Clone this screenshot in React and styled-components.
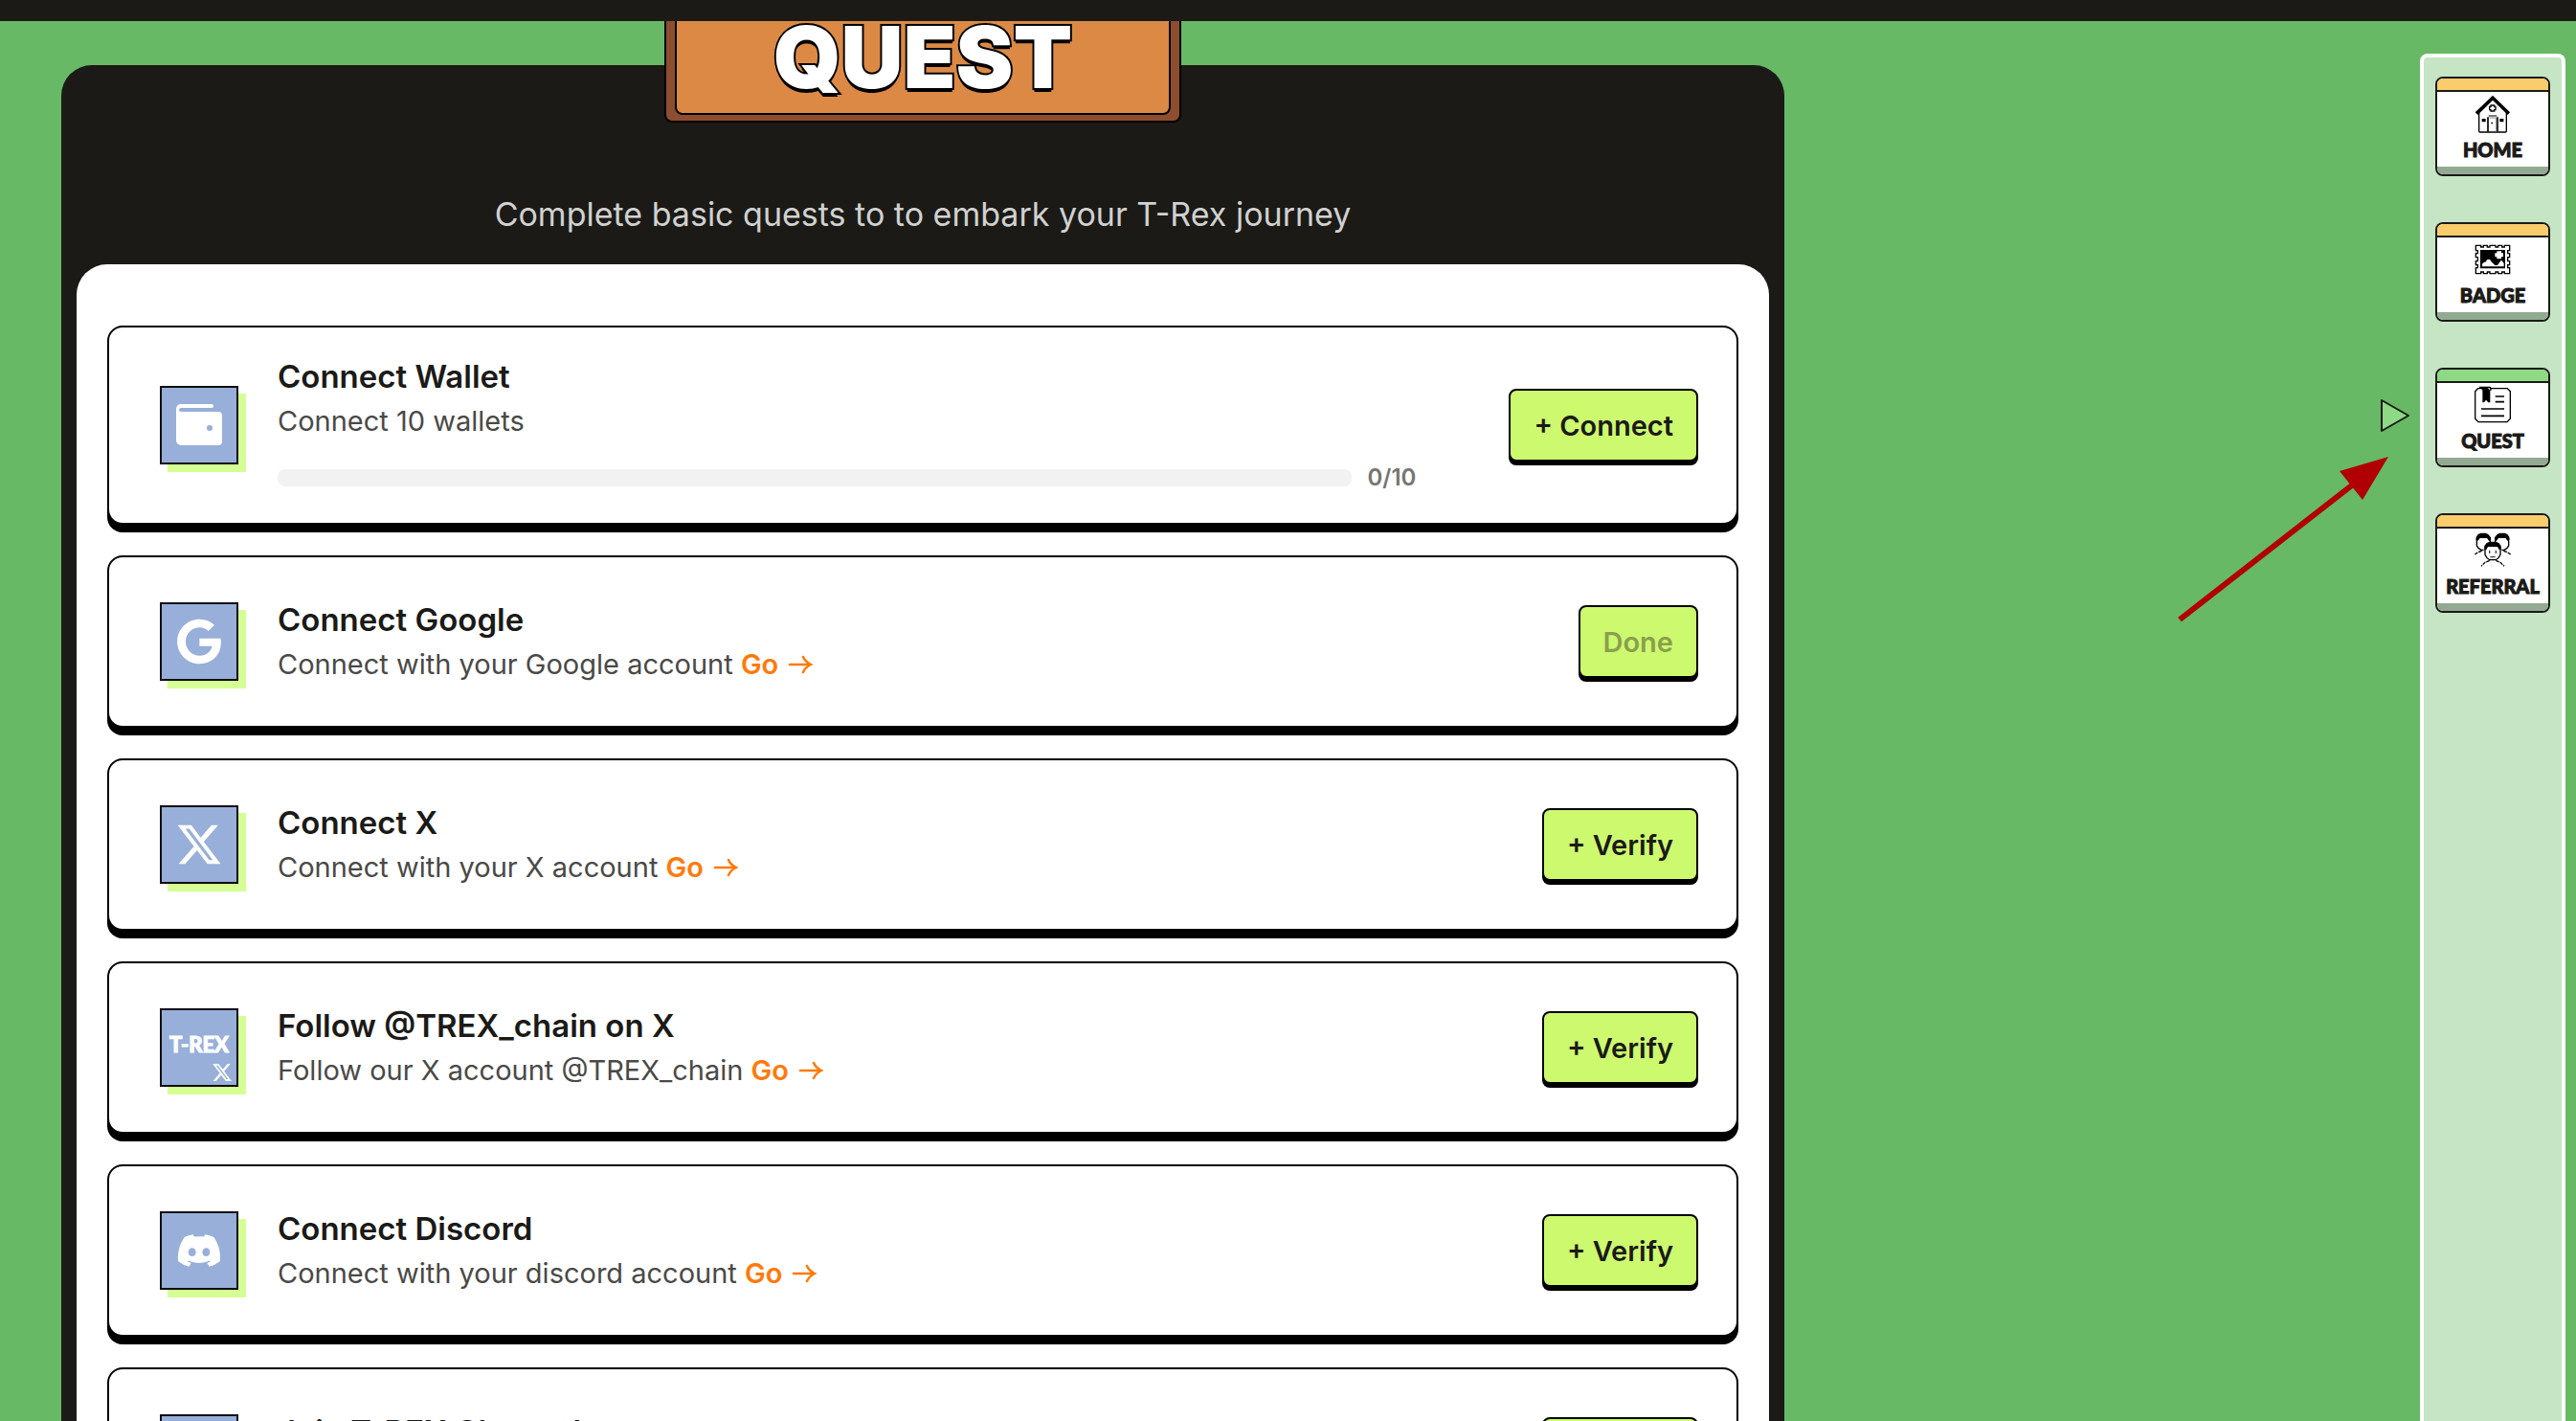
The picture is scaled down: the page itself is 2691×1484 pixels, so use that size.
import React from "react";
import styled, { createGlobalStyle } from "styled-components";
import { FaDiscord, FaGoogle, FaXTwitter } from "react-icons/fa6";

const GlobalStyle = createGlobalStyle`
    * {
        box-sizing: border-box;
    }
    body {
        margin: 0;
        background-color: #67b965;
        color: #1b1a17;
        font-family: Inter, "Open Sans", sans-serif;
    }
`;

const Page = styled.div`
    height: 100vh;
    display: flex;
    flex-direction: column;
    overflow: hidden;
`;
const TopBar = styled.header`
    flex: none;
    height: 22px;
    background-color: #1b1a17;
    position: relative;
    z-index: 1;
`;
const Body = styled.div`
    flex: 1;
    min-height: 0;
    display: flex;
    justify-content: space-between;
    align-items: flex-start;
    padding: 34px 11px 0 64px;
    gap: 64px;
`;

const Board = styled.main`
    flex: 0 1 1800px;
    min-width: 0;
    margin-top: 12px;
    padding: 122px 16px 16px;
    border-radius: 32px;
    background-color: #1b1a17;
    position: relative;
`;
const Sign = styled.div`
    position: absolute;
    top: -98px;
    left: 50%;
    transform: translateX(-50%);
    width: 540px;
    padding: 8px 9px 6px;
    border: 2px solid #000;
    border-radius: 8px;
    background-color: #8c4e2f;
`;
const SignTitle = styled.h1`
    margin: 0;
    padding: 38px 0 0;
    height: 140px;
    border: 2px solid #000;
    border-radius: 8px;
    background-color: #db8944;
    color: #fff;
    font-family: Inter, sans-serif;
    font-size: 90px;
    font-weight: 900;
    line-height: 80px;
    text-align: center;
    -webkit-text-stroke: 4px #000;
    paint-order: stroke fill;
    text-shadow: 0 4px 0 #000;
`;
const Intro = styled.p`
    margin: 0 0 18px;
    color: #d1d1d0;
    font-size: 34px;
    line-height: 68px;
    text-align: center;
`;
const List = styled.ul`
    margin: 0;
    padding: 64px 32px;
    display: flex;
    flex-direction: column;
    gap: 32px;
    border-radius: 32px;
    background-color: #fff;
    list-style: none;
`;
const Item = styled.li`
    min-height: 180px;
    padding: 29px 40px 29px 53px;
    display: flex;
    align-items: center;
    gap: 41px;
    border: 2px solid #000;
    border-radius: 16px;
    background-color: #fff;
    box-shadow: 0 8px 0 #000;
`;
const Tile = styled.div`
    flex: none;
    width: 82px;
    height: 82px;
    display: flex;
    flex-direction: column;
    align-items: center;
    justify-content: center;
    border: 2px solid #0d0d0d;
    background-color: #97afd9;
    box-shadow: 8px 8px 0 #d5ff95;
    color: #fff;
`;
const TrexMark = styled.span`
    margin-top: 22px;
    font-family: Lato, sans-serif;
    font-size: 22px;
    font-weight: 900;
    line-height: 28px;
    white-space: nowrap;
    -webkit-text-stroke: 1px #fff;
`;
const TrexBadge = styled.span`
    align-self: flex-end;
    height: 28px;
    padding: 4px 4px 0 0;
    line-height: 0;
`;
const Info = styled.div`
    flex: 1;
    min-width: 0;
`;
const Title = styled.h2`
    margin: 0 0 4px;
    font-size: 33px;
    font-weight: 600;
    line-height: 44px;
`;
const Desc = styled.p`
    margin: 0;
    color: #4a4947;
    font-size: 29px;
    line-height: 42px;
`;
const GoLink = styled.a`
    display: inline-flex;
    align-items: center;
    gap: 10px;
    color: #ff7a0a;
    font-weight: 600;
    text-decoration: none;
`;
const Progress = styled.div`
    margin: 20px 56px 0 0;
    display: flex;
    align-items: center;
    gap: 16px;
`;
const Track = styled.div`
    flex: 1;
    height: 18px;
    border-radius: 8px;
    background-color: #f2f2f2;
    overflow: hidden;
`;
const Fill = styled.div`
    height: 100%;
    background-color: #cdf96f;
`;
const Count = styled.span`
    color: #767573;
    font-size: 24px;
    font-weight: 600;
    line-height: 36px;
`;
const Action = styled.button`
    flex: none;
    height: 76px;
    padding: 0 24px;
    border: 2px solid #000;
    border-radius: 8px;
    background-color: #cdf96f;
    box-shadow: 0 4px 0 #000;
    color: #1b1a17;
    font-family: inherit;
    font-size: 29px;
    font-weight: 600;
    cursor: pointer;

    &:disabled {
        color: #8a9f4d;
        cursor: default;
    }
`;

const SideNav = styled.nav`
    flex: none;
    align-self: stretch;
    padding: 20px 12px;
    display: flex;
    flex-direction: column;
    gap: 48px;
    border: 4px solid #fff;
    border-bottom: none;
    border-radius: 8px 8px 0 0;
    background-color: #c5e5c4;
`;
const NavItem = styled.div`
    position: relative;
`;
const NavLink = styled.a`
    width: 120px;
    height: 104px;
    display: flex;
    flex-direction: column;
    align-items: center;
    border: 2px solid #1b1a17;
    border-radius: 8px;
    background-color: #fff;
    color: #1b1a17;
    overflow: hidden;
    text-decoration: none;

    &::before {
        content: "";
        flex: none;
        align-self: stretch;
        height: 12px;
        border-bottom: 2px solid #1b1a17;
        background-color: ${(props) => (props.$active ? "#8dd984" : "#f9cc6c")};
    }
    &::after {
        content: "";
        flex: none;
        align-self: stretch;
        height: 8px;
        background-color: #93aa92;
    }
`;
const NavIcon = styled.span`
    height: 48px;
    display: flex;
    align-items: center;
`;
const NavLabel = styled.span`
    height: 32px;
    font-family: Lato, sans-serif;
    font-size: 20px;
    font-weight: 900;
    line-height: 26px;
    -webkit-text-stroke: 1px #1b1a17;
`;
const Marker = styled.svg`
    position: absolute;
    top: 32px;
    left: -58px;
`;
const Pointer = styled.svg`
    position: absolute;
    top: 92px;
    left: -270px;
`;

const WalletIcon = () => (
    <svg width="48" height="44" viewBox="0 0 48 44">
        <path
            fill="#fff"
            d="M5 0h32a2 2 0 0 1 0 4H5a2 2 0 0 0 0 4h39a4 4 0 0 1 4 4v27a4 4 0 0 1-4 4H5a5 5 0 0 1-5-5V5a5 5 0 0 1 5-5z"
        />
        <circle cx="35" cy="25" r="3" fill="#97afd9" />
    </svg>
);

const TrexIcon = () => (
    <>
        <TrexMark>T-REX</TrexMark>
        <TrexBadge>
            <FaXTwitter size={22} />
        </TrexBadge>
    </>
);

const HomeIcon = () => (
    <svg width="38" height="40" viewBox="0 0 114 120" fill="none" stroke="#000" strokeWidth="4">
        <path d="M57 2l54 53-7 8-47-46-47 46-8-8z" fill="#000" stroke="none" />
        <path d="M14 56v58q0 3 3 3h80q3 0 3-3V56" />
        <path d="M51 33h11v4h4v10h-4v4H51v-4h-4V37h4z" />
        <path d="M44 66h26" stroke="#555" />
        <path d="M42 116V70M72 116V70" strokeWidth="5" />
        <path d="M46 72h22v44" stroke="#888" strokeWidth="3" />
        <path d="M23 75h12v10H23zM79 75h12v10H79zM52 86h5v5h-5z" fill="#000" stroke="none" />
    </svg>
);

const BadgeIcon = () => (
    <svg width="38" height="32" viewBox="0 0 114 96" fill="none" stroke="#000" strokeWidth="4">
        <path d="M4 4h16v5h8V4h12v5h8V4h18v5h8V4h12v5h8V4h16v16h-6v9h6v12h-6v12h6v12h-6v9h6v18H94v-5h-8v5H74v-5h-8v5H48v-5h-8v5H28v-5h-8v5H4V74h6v-9H4V53h6V41H4V29h6v-9H4z" />
        <path d="M18 18h78v58H18z" fill="#000" stroke="none" />
        <path
            d="M24 70v-8l6-6h4l6-8h8l6 8 10 10h8l10-14h4l6 8v10z"
            fill="#fff"
            stroke="none"
        />
        <path d="M70 22h14v6h6v12h-6v6H70v-6h-6V28h6z" fill="#fff" stroke="none" />
    </svg>
);

const QuestIcon = () => (
    <svg width="40" height="40" viewBox="0 0 120 120" fill="none" stroke="#000" strokeWidth="4">
        <path d="M14 8h92l4 4 5 5v86l-5 5-5 5H15l-5-5-5-5V17l5-5z" />
        <path d="M18 2h34l4 4v8h-4v38h-6l-7-8-6 8h-5V14l-4-6h-6z" fill="#000" stroke="none" />
        <path d="M46 8h4v4" stroke="#fff" strokeWidth="3" />
        <path d="M68 33h28M68 50h28M24 72h72M24 94h72" strokeWidth="5" />
    </svg>
);

const ReferralIcon = () => (
    <svg width="40" height="38" viewBox="0 0 120 114" fill="none" stroke="#000" strokeWidth="4">
        <path d="M10 18v24l6 8 8 5h8M110 18v24l-6 8-8 5h-8M52 18v14M68 18v14" />
        <path
            d="M8 24V14l6-8 8-4h16l8 4 8 10v10h-6l-6-8H20l-6 8zM112 24V14l-6-8-8-4H82l-8 4-8 10v10h6l6-8h22l6 8z"
            fill="#000"
            stroke="none"
        />
        <path d="M36 46v24l6 10 8 6h20l8-6 6-10V46" fill="#fff" />
        <path d="M34 54V42l7-9 9-4h20l9 4 7 9v12h-6l-5-9H45l-5 9z" fill="#000" stroke="none" />
        <path d="M50 56v10M70 56v10M52 77h16" stroke="#444" />
        <path d="M26 58l-12 4-10 7M94 58l12 4 10 7M50 88l-14 6-12 12M70 88l14 6 12 12" strokeDasharray="11 3" />
    </svg>
);

const GoArrow = () => (
    <svg width="26" height="20" viewBox="0 0 26 20" fill="none" stroke="currentColor" strokeWidth="2.5" strokeLinecap="round">
        <path d="M2 10h21M16 2q2 5 8 8-6 3-8 8" />
    </svg>
);

const quests = [
    {
        title: "Connect Wallet",
        desc: "Connect 10 wallets",
        icon: <WalletIcon />,
        progress: { value: 0, max: 10 },
        action: "+ Connect",
    },
    {
        title: "Connect Google",
        desc: "Connect with your Google account",
        icon: <FaGoogle size={48} />,
        go: true,
        action: "Done",
        done: true,
    },
    {
        title: "Connect X",
        desc: "Connect with your X account",
        icon: <FaXTwitter size={50} />,
        go: true,
        action: "+ Verify",
    },
    {
        title: "Follow @TREX_chain on X",
        desc: "Follow our X account @TREX_chain",
        icon: <TrexIcon />,
        go: true,
        action: "+ Verify",
    },
    {
        title: "Connect Discord",
        desc: "Connect with your discord account",
        icon: <FaDiscord size={48} />,
        go: true,
        action: "+ Verify",
    },
    {
        title: "Join T-REX Channel",
        desc: "Join our discord channel",
        icon: <FaDiscord size={48} />,
        go: true,
        action: "+ Verify",
    },
];

const navItems = [
    { label: "HOME", icon: <HomeIcon /> },
    { label: "BADGE", icon: <BadgeIcon /> },
    { label: "QUEST", icon: <QuestIcon />, active: true },
    { label: "REFERRAL", icon: <ReferralIcon /> },
];

const Quest = ({ quest }) => (
    <Item>
        <Tile>{quest.icon}</Tile>
        <Info>
            <Title>{quest.title}</Title>
            <Desc>
                {quest.desc}{" "}
                {quest.go && (
                    <GoLink href="#go">
                        Go <GoArrow />
                    </GoLink>
                )}
            </Desc>
            {quest.progress && (
                <Progress>
                    <Track
                        role="progressbar"
                        aria-label={quest.title}
                        aria-valuenow={quest.progress.value}
                        aria-valuemax={quest.progress.max}
                    >
                        <Fill style={{ width: `${(quest.progress.value / quest.progress.max) * 100}%` }} />
                    </Track>
                    <Count>
                        {quest.progress.value}/{quest.progress.max}
                    </Count>
                </Progress>
            )}
        </Info>
        <Action disabled={quest.done}>{quest.action}</Action>
    </Item>
);

const App = () => {
    return (
        <Page>
            <GlobalStyle />
            <TopBar />
            <Body>
                <Board>
                    <Sign>
                        <SignTitle>QUEST</SignTitle>
                    </Sign>
                    <Intro>Complete basic quests to to embark your T-Rex journey</Intro>
                    <List>
                        {quests.map((quest) => (
                            <Quest key={quest.title} quest={quest} />
                        ))}
                    </List>
                </Board>
                <SideNav>
                    {navItems.map((item) => (
                        <NavItem key={item.label}>
                            <NavLink href={`#${item.label.toLowerCase()}`} $active={item.active}>
                                <NavIcon>{item.icon}</NavIcon>
                                <NavLabel>{item.label}</NavLabel>
                            </NavLink>
                            {item.active && (
                                <>
                                    <Marker width="32" height="36" viewBox="0 0 32 36">
                                        <path
                                            d="M2 2v32l28-16z"
                                            fill="#8dd984"
                                            stroke="#1b1a17"
                                            strokeWidth="2"
                                            strokeLinejoin="round"
                                        />
                                    </Marker>
                                    <Pointer width="222" height="176" viewBox="0 0 222 176">
                                        <path d="M3 171L184 30" stroke="#b00006" strokeWidth="6" />
                                        <path d="M221 1l-51 15 24 30z" fill="#b00006" />
                                    </Pointer>
                                </>
                            )}
                        </NavItem>
                    ))}
                </SideNav>
            </Body>
        </Page>
    );
};

export default App;
